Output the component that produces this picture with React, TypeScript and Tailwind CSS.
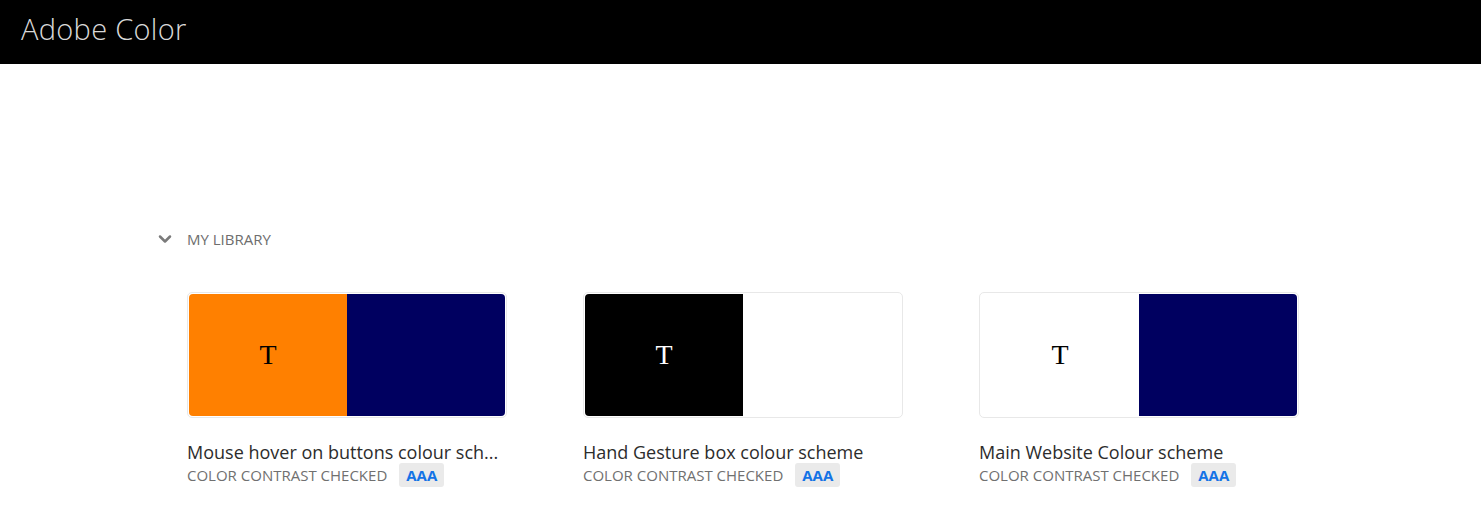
import { ChevronDown } from 'lucide-react'

const themes = [
  { name: 'Mouse hover on buttons colour sch...', left: 'bg-[#ff8000]', right: 'bg-[#000060]', t: 'text-black' },
  { name: 'Hand Gesture box colour scheme', left: 'bg-black', right: 'bg-white', t: 'text-white' },
  { name: 'Main Website Colour scheme', left: 'bg-white', right: 'bg-[#000060]', t: 'text-black' },
]

function ThemeCard({ theme }: { theme: (typeof themes)[number] }) {
  return (
    <div className="w-[320px]">
      <div className="flex h-[126px] rounded-[5px] border border-[#e8e8e8] p-px">
        <div className={`flex w-1/2 items-center justify-center rounded-l-[4px] ${theme.left}`}>
          <span className={`font-['Liberation_Serif',serif] text-[28px] leading-none ${theme.t}`}>T</span>
        </div>
        <div className={`w-1/2 rounded-r-[4px] ${theme.right}`} />
      </div>
      <div className="mt-[22px] truncate text-[18px] leading-[24px] text-[#2c2c2c]">{theme.name}</div>
      <div className="-mt-px flex items-center gap-3">
        <span className="text-[15px] uppercase text-[#707070]">Color Contrast Checked</span>
        <span className="rounded-[3px] bg-[#eaeaea] px-[7px] py-px text-[15px] font-bold text-[#1473e6]">AAA</span>
      </div>
    </div>
  )
}

export default function App() {
  return (
    <div className="min-h-[528px] bg-white font-['Open_Sans',sans-serif]">
      {/* top bar */}
      <header className="flex h-16 items-center bg-black px-[21px] pb-[6px]">
        <span className="text-[29px] font-light tracking-[0.3px] text-[#d8d8d8]">Adobe Color</span>
      </header>

      <main className="pl-[155px] pt-[164px]">
        <button className="flex items-center gap-[12px] text-[15px] uppercase text-[#6e6e6e]">
          <ChevronDown size={20} strokeWidth={3} className="text-[#7a7a7a]" />
          <span>My Library</span>
        </button>

        <div className="mt-[41px] flex gap-[76px] pl-[32px]">
          {themes.map((t) => (
            <ThemeCard key={t.name} theme={t} />
          ))}
        </div>
      </main>
    </div>
  )
}
